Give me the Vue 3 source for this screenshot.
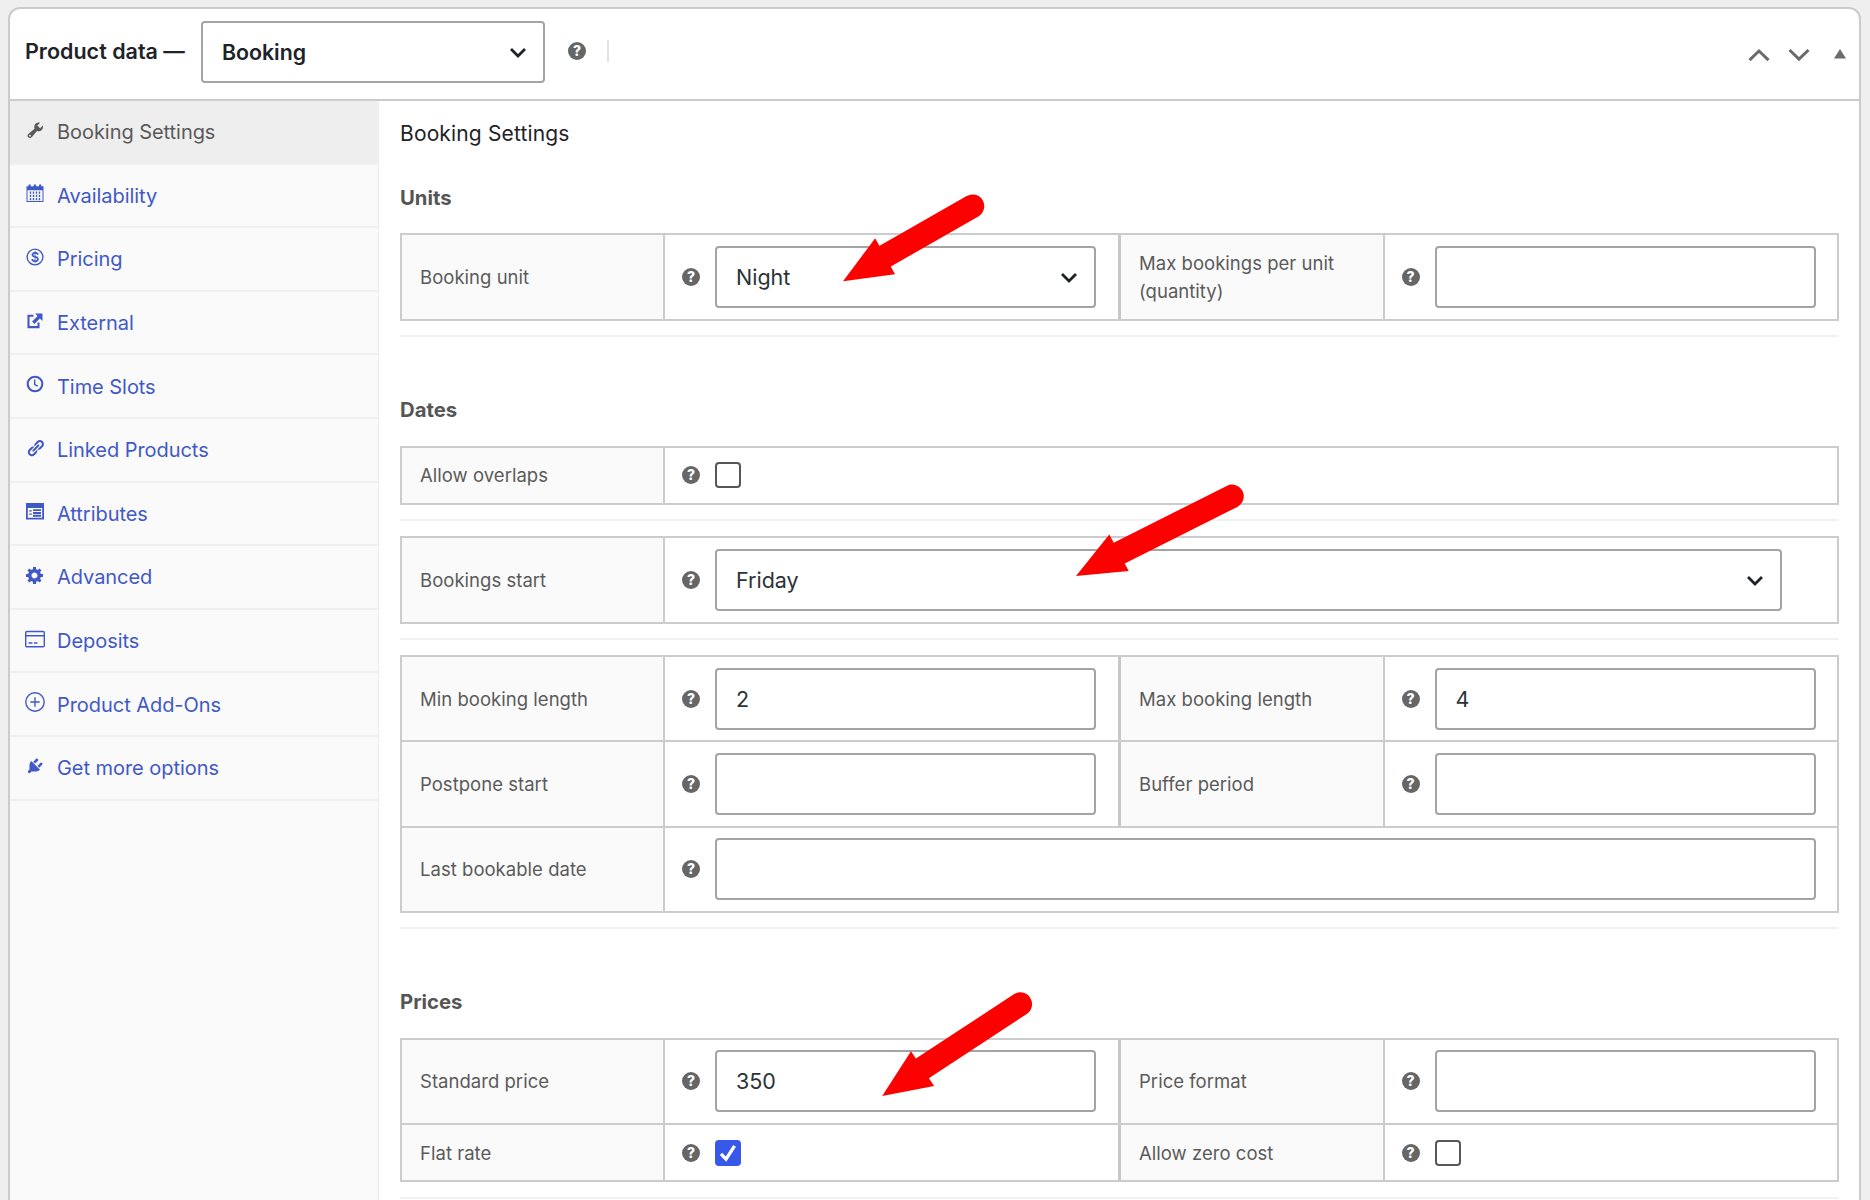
<script setup>
import { ref } from 'vue';

const productType = ref('Booking');

const tabs = [
  { id: 'settings', label: 'Booking Settings' },
  { id: 'availability', label: 'Availability' },
  { id: 'pricing', label: 'Pricing' },
  { id: 'external', label: 'External' },
  { id: 'slots', label: 'Time Slots' },
  { id: 'linked', label: 'Linked Products' },
  { id: 'attributes', label: 'Attributes' },
  { id: 'advanced', label: 'Advanced' },
  { id: 'deposits', label: 'Deposits' },
  { id: 'addons', label: 'Product Add-Ons' },
  { id: 'more', label: 'Get more options' },
];
const activeTab = ref('settings');

const sections = [
  {
    title: 'Units',
    groups: [
      [
        [
          { label: 'Booking unit', type: 'select', value: 'Night' },
          { label: 'Max bookings per unit (quantity)', type: 'text', value: '' },
        ],
      ],
    ],
  },
  {
    title: 'Dates',
    groups: [
      [[{ label: 'Allow overlaps', type: 'checkbox', value: false }]],
      [[{ label: 'Bookings start', type: 'select', value: 'Friday' }]],
      [
        [
          { label: 'Min booking length', type: 'text', value: '2' },
          { label: 'Max booking length', type: 'text', value: '4' },
        ],
        [
          { label: 'Postpone start', type: 'text', value: '' },
          { label: 'Buffer period', type: 'text', value: '' },
        ],
        [{ label: 'Last bookable date', type: 'text', value: '' }],
      ],
    ],
  },
  {
    title: 'Prices',
    groups: [
      [
        [
          { label: 'Standard price', type: 'text', value: '350' },
          { label: 'Price format', type: 'text', value: '' },
        ],
        [
          { label: 'Flat rate', type: 'checkbox', value: true },
          { label: 'Allow zero cost', type: 'checkbox', value: false },
        ],
      ],
    ],
  },
];

const arrows = [
  { head: '843,281.2 875.2,238.3 895,274.3', from: [885, 256.3], to: [972.5, 206.2] },
  { head: '1076,575.9 1109.3,534.5 1128.7,571', from: [1119.5, 553], to: [1232, 496.4] },
  { head: '882.2,1095.9 911,1051.3 934.1,1086', from: [922.4, 1068.4], to: [1020.3, 1004.1] },
];
</script>

<template>
  <div class="page">
    <div class="panel">
      <header class="panel-header">
        <h2 class="panel-title">Product data —</h2>
        <div class="select type-select">
          <span>{{ productType }}</span>
          <svg class="chevron" viewBox="0 0 18 12"><path d="M2 2l7 7 7-7" /></svg>
        </div>
        <span class="help">?</span>
        <span class="divider"></span>
        <div class="order-actions">
          <svg class="order" viewBox="0 0 22 14"><path d="M1.5 12.2L11 3l9.5 9.2" /></svg>
          <svg class="order" viewBox="0 0 22 14"><path d="M1.5 2L11 11.2 20.5 2" /></svg>
          <svg class="toggle" viewBox="0 0 12 10"><path d="M6 0l6 9.4H0z" /></svg>
        </div>
      </header>

      <div class="panel-body">
        <ul class="tabs">
          <li v-for="tab in tabs" :key="tab.id" class="tab" :class="{ 'tab--active': tab.id === activeTab }">
            <svg class="tab-icon" viewBox="0 0 20 20">
              <path v-if="tab.id === 'settings'" transform="translate(.6 .6) scale(.97)" d="M16.68 9.77c-1.34 1.34-3.3 1.67-4.95.99l-5.41 6.52c-.99.99-2.59.99-3.58 0s-.99-2.59 0-3.57l6.52-5.42c-.68-1.65-.35-3.61.99-4.95 1.28-1.28 3.12-1.62 4.72-1.06l-2.89 2.89 2.82 2.82 2.86-2.87c.53 1.58.18 3.39-1.08 4.65zM3.81 16.21c.4.39 1.04.39 1.43 0 .4-.4.4-1.04 0-1.43-.39-.4-1.03-.4-1.43 0-.39.39-.39 1.03 0 1.43z" />
              <template v-else-if="tab.id === 'availability'">
                <path d="M1.5 3.2h2V1.5h2.2v1.7h3.1V1.5H11v1.7h3.1V1.5h2.2v1.7h2.2V19h-17zM2.5 7.2V18h15V7.2z" fill-rule="evenodd" />
                <path class="line thin" d="M5.5 8.6v8.6M8.5 8.6v8.6M11.5 8.6v8.6M14.5 8.6v8.6" stroke-dasharray="2.2 1" />
              </template>
              <template v-else-if="tab.id === 'pricing'">
                <circle class="line thin" cx="10" cy="10" r="7.9" />
                <text x="10" y="14.7" text-anchor="middle" class="dollar">$</text>
              </template>
              <template v-else-if="tab.id === 'external'">
                <path class="line" d="M8.5 4.7H3.5v11.4h10v-4.600" />
                <path d="M10 2.5h7.5V10l-2.6-2.6-5.5 5.5-2.3-2.3 5.500-5.5z" />
              </template>
              <template v-else-if="tab.id === 'slots'">
                <circle class="line" cx="10" cy="10" r="7.3" />
                <path class="line thin" d="M9.7 5.5v5l3 1.7" />
              </template>
              <path v-else-if="tab.id === 'linked'" transform="translate(.9 .6) scale(.95)" d="M17.74 2.76c1.68 1.69 1.68 4.41 0 6.1l-1.53 1.52c-1.12 1.12-2.7 1.47-4.14 1.09l2.62-2.61.76-.77.76-.76c.84-.84.84-2.2 0-3.04-.84-.85-2.2-.85-3.04 0l-.77.76-3.38 3.38c-.37-1.44-.02-3.02 1.1-4.14l1.52-1.53c1.69-1.68 4.42-1.68 6.1 0zM8.59 13.43l5.34-5.34c.42-.42.42-1.1 0-1.52-.44-.43-1.13-.39-1.53 0l-5.33 5.34c-.42.42-.42 1.1 0 1.52.44.43 1.13.39 1.52 0zm-.76 2.29l4.14-4.15c.38 1.44.03 3.02-1.09 4.14l-1.52 1.53c-1.69 1.68-4.41 1.68-6.1 0-1.68-1.68-1.68-4.42 0-6.1l1.53-1.52c1.12-1.12 2.7-1.47 4.14-1.1l-4.14 4.15c-.85.84-.85 2.2 0 3.05.84.84 2.2.84 3.04 0z" />
              <path v-else-if="tab.id === 'attributes'" fill-rule="evenodd" d="M1 2h18v16.5H1zM2.8 7v9.8h14.400V7zM4.2 9.3h2.6v1.300H4.2zM4.2 12.5h2.6v1.300H4.2zM8 8.2h8v1.900H8zM8 11h8v1.900H8zM8 13.8h8v1.900H8z" />
              <path v-else-if="tab.id === 'advanced'" d="M18 12h-2.18c-.17.7-.44 1.35-.81 1.93l1.54 1.54-2.1 2.1-1.54-1.54c-.58.36-1.23.63-1.91.79V19H8v-2.18c-.68-.16-1.33-.43-1.91-.79l-1.54 1.54-2.12-2.12 1.54-1.54c-.36-.58-.63-1.23-.79-1.91H1V9.03h2.17c.16-.7.44-1.35.8-1.94L2.43 5.55l2.1-2.1 1.54 1.54c.58-.37 1.24-.64 1.93-.81V2h3v2.18c.68.16 1.33.43 1.91.79l1.54-1.54 2.12 2.12-1.54 1.54c.36.59.64 1.24.8 1.94H18V12zm-8.5 1.5c1.66 0 3-1.34 3-3s-1.34-3-3-3-3 1.34-3 3 1.34 3 3 3z" />
              <template v-else-if="tab.id === 'deposits'">
                <rect class="line thin" x=".7" y="2.5" width="18.6" height="15.3" rx="1.2" />
                <path class="line thin" d="M1 6.8h18M3.5 14h4M9 14h3.5" />
              </template>
              <template v-else-if="tab.id === 'addons'">
                <circle class="line thin" cx="10" cy="10" r="9.2" />
                <path class="line thin" d="M10 5.3v9.4M5.3 10h9.4" />
              </template>
              <path v-else transform="translate(.6 .2) scale(.96)" d="M13.11 4.36L9.87 7.6 8 5.73l3.24-3.24c.35-.34 1.05-.2 1.56.32.52.51.66 1.21.31 1.55zm-8 1.77l.91-1.12 9.01 9.01-1.19.84c-.71.71-2.63 1.16-3.82 1.16H6.14L4.9 17.26c-.59.59-1.54.59-2.12 0-.59-.58-.59-1.53 0-2.12l1.24-1.24v-3.88c0-1.13.4-3.19 1.09-3.89zm7.26 3.97l3.24-3.24c.34-.35 1.04-.21 1.55.31.52.51.66 1.21.31 1.55l-3.24 3.25z" />
            </svg>
            <span class="tab-label">{{ tab.label }}</span>
          </li>
        </ul>

        <main class="content">
          <h3 class="content-title">Booking Settings</h3>
          <section v-for="section in sections" :key="section.title" class="section">
            <h4 class="section-title">{{ section.title }}</h4>
            <div v-for="(group, g) in section.groups" :key="g" class="group">
              <div class="table">
                <div
                  v-for="(row, r) in group"
                  :key="r"
                  class="row"
                  :class="{ 'row--single': row.length === 1, 'row--short': row[0].type === 'checkbox' }"
                >
                  <template v-for="field in row" :key="field.label">
                    <div class="cell-label">{{ field.label }}</div>
                    <div class="cell-field">
                      <span class="help">?</span>
                      <div v-if="field.type === 'select'" class="select">
                        <span>{{ field.value }}</span>
                        <svg class="chevron" viewBox="0 0 18 12"><path d="M2 2l7 7 7-7" /></svg>
                      </div>
                      <span v-else-if="field.type === 'checkbox'" class="checkbox" :class="{ 'checkbox--on': field.value }">
                        <svg v-if="field.value" viewBox="0 0 20 20"><path d="M3.6 10.8l4.6 4.7L16 3.6" /></svg>
                      </span>
                      <div v-else class="input">{{ field.value }}</div>
                    </div>
                  </template>
                </div>
              </div>
              <hr class="rule" />
            </div>
          </section>
        </main>
      </div>
    </div>

    <!-- callout arrows drawn over the form -->
    <svg class="callouts" viewBox="0 0 1870 1200">
      <g v-for="arrow in arrows" :key="arrow.head">
        <line :x1="arrow.from[0]" :y1="arrow.from[1]" :x2="arrow.to[0]" :y2="arrow.to[1]" class="shaft" />
        <polygon :points="arrow.head" />
      </g>
    </svg>
  </div>
</template>

<style>
html,
body {
  margin: 0;
  background: #f0eff0;
}
</style>

<style scoped>
.page {
  position: relative;
  box-sizing: border-box;
  width: 1870px;
  height: 1200px;
  padding: 7px 9px 0 8px;
  overflow: hidden;
  background: #f0eff0;
  color: #2c3338;
  font-family: Inter, "Liberation Sans", sans-serif;
}

.page * {
  box-sizing: border-box;
}

.panel {
  height: 1220px;
  border: 2px solid #cbcbcc;
  border-radius: 12px;
  background: #fff;
  overflow: hidden;
}

.panel-header {
  display: flex;
  align-items: center;
  height: 92px;
  padding: 0 13px 7px 15px;
  border-bottom: 2px solid #cbcbcc;
}

.panel-title {
  width: 176px;
  margin: 0;
  font-size: 21.5px;
  font-weight: 600;
  line-height: 28px;
  letter-spacing: 0;
  white-space: nowrap;
  color: #1d2327;
}

.select,
.input {
  display: flex;
  align-items: center;
  flex: 1;
  height: 62px;
  padding: 0 16px 0 19px;
  border: 2px solid #a3a4a6;
  border-radius: 4px;
  background: #fff;
  color: #2c3338;
  font-size: 21.5px;
}

.select {
  justify-content: space-between;
}

.type-select {
  flex: none;
  width: 344px;
  margin-top: 3px;
  font-size: 21.3px;
  font-weight: 600;
  color: #1d2327;
}

.chevron {
  width: 18px;
  height: 12px;
  margin-top: 2px;
  fill: none;
  stroke: #1d2327;
  stroke-width: 2.8;
}

.help {
  flex: none;
  width: 18px;
  height: 18px;
  border-radius: 50%;
  background: #666;
  color: #fff;
  font-size: 14px;
  font-weight: 800;
  line-height: 18px;
  text-align: center;
}

.panel-header .help {
  margin-left: 23px;
}

.divider {
  width: 2px;
  height: 22px;
  margin-left: 21px;
  background: #e3e3e4;
}

.order-actions {
  display: flex;
  align-items: center;
  margin-top: 8px;
  margin-left: auto;
}

.order {
  width: 22px;
  height: 14px;
  margin-right: 18px;
  fill: none;
  stroke: #6a6b6d;
  stroke-width: 3;
}

.order + .order {
  margin-right: 24px;
}

.toggle {
  width: 12px;
  height: 10px;
  margin-top: -2px;
  fill: #6a6b6d;
}

.panel-body {
  display: flex;
  height: 1130px;
}

.tabs {
  flex: none;
  width: 369px;
  margin: 0;
  padding: 0;
  list-style: none;
  border-right: 1px solid #ececec;
  background: #fafafa;
}

.tab {
  display: flex;
  align-items: center;
  gap: 12px;
  height: 63.6px;
  padding-left: 15px;
  border-bottom: 2px solid #f0f0f0;
  color: #4159c6;
  font-size: 20px;
  letter-spacing: -0.05px;
}

.tab--active {
  margin-right: -1px;
  background: #eee;
  color: #5a5a5a;
}

.tab-icon {
  width: 20px;
  height: 20px;
  margin-top: -4px;
  fill: currentColor;
}

.tab-label {
  margin-top: 1px;
}

.tab .line {
  fill: none;
  stroke: currentColor;
  stroke-width: 2.1;
}

.tab .thin {
  stroke-width: 1.4;
}

.dollar {
  font-size: 13px;
  font-weight: 600;
}

.content {
  flex: 1;
  padding: 17px 20px 0 21px;
}

.content-title {
  margin: 0;
  font-size: 21px;
  font-weight: 400;
  line-height: 32px;
  letter-spacing: 0.15px;
  color: #1d2327;
}

.section-title {
  height: 108.7px;
  margin: 0;
  padding-top: 59px;
  font-size: 20.3px;
  font-weight: 700;
  line-height: 28px;
  letter-spacing: 0;
  color: #555;
}

.section:first-of-type .section-title {
  height: 83.2px;
  padding-top: 33.5px;
}

.table {
  border: 2px solid #cbcccd;
}

.row {
  display: grid;
  grid-template-columns: 263px 456px 263.5px 1fr;
  height: 83.5px;
}

.row + .row {
  height: 85.2px;
  border-top: 2px solid #cbcccd;
}

.row--single {
  grid-template-columns: 263px 1fr;
}

.row--short {
  height: 55.3px;
}

.row + .row--short {
  height: 57px;
}

.cell-label {
  display: flex;
  align-items: center;
  padding: 0 20px 0 18px;
  border-right: 2px solid #cbcccd;
  background: #fafafa;
  color: #5a5a5a;
  font-size: 18.5px;
  line-height: 28px;
  letter-spacing: 0.03px;
}

.cell-field {
  display: flex;
  align-items: center;
  gap: 15px;
  padding: 0 22px 0 17px;
}

.cell-field:nth-child(2):not(:last-child) {
  border-right: 3px solid #c6c8ca;
}

.cell-field:last-child {
  padding-right: 21px;
}

.row--single .select {
  margin-right: 34px;
}

.checkbox {
  width: 26px;
  height: 26px;
  border: 2px solid #55585b;
  border-radius: 4px;
}

.checkbox--on {
  border-color: #3858e9;
  background: #3858e9;
}

.checkbox svg {
  display: block;
  width: 22px;
  height: 22px;
  fill: none;
  stroke: #fff;
  stroke-width: 3;
}

.rule {
  height: 2px;
  margin: 14.3px 0 14.9px;
  border: 0;
  background: #f1f1f1;
}

.group:last-child .rule {
  margin-bottom: 0;
}

.callouts {
  position: absolute;
  inset: 0;
  width: 1870px;
  height: 1200px;
  fill: #fb0200;
  pointer-events: none;
}

.shaft {
  stroke: #fb0200;
  stroke-width: 23.5;
  stroke-linecap: round;
}
</style>
